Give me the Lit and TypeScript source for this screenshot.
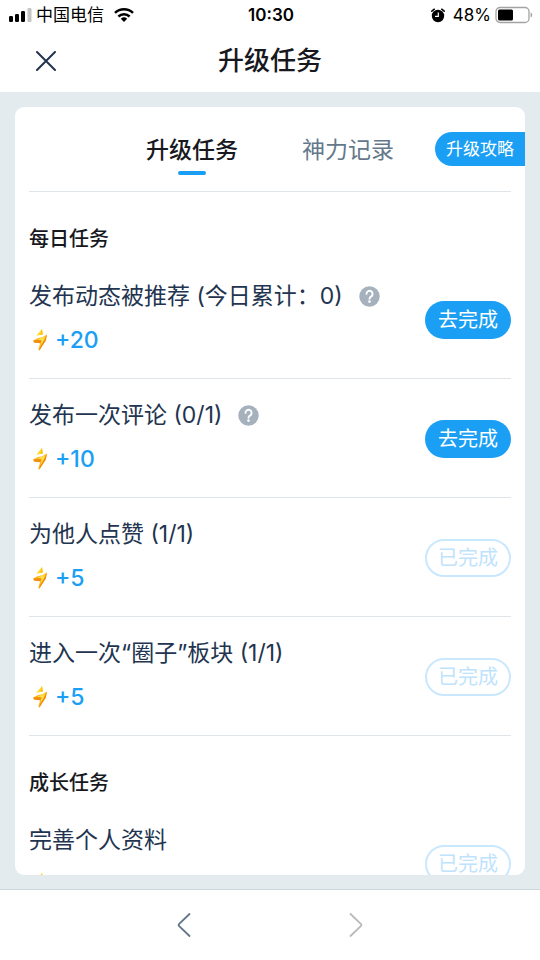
import { LitElement, html, css, svg, nothing } from "lit";
import { customElement, property, state } from "lit/decorators.js";
import { classMap } from "lit/directives/class-map.js";

interface Task {
  title: string;
  reward: number;
  done: boolean;
  help?: boolean;
}

interface TaskGroup {
  name: string;
  tasks: Task[];
}

const GROUPS: TaskGroup[] = [
  {
    name: "每日任务",
    tasks: [
      { title: "发布动态被推荐 (今日累计：0)", reward: 20, done: false, help: true },
      { title: "发布一次评论 (0/1)", reward: 10, done: false, help: true },
      { title: "为他人点赞 (1/1)", reward: 5, done: true },
      { title: "进入一次“圈子”板块 (1/1)", reward: 5, done: true },
    ],
  },
  {
    name: "成长任务",
    tasks: [{ title: "完善个人资料", reward: 10, done: true }],
  },
];

const reset = css`
  * {
    box-sizing: border-box;
  }
  button {
    margin: 0;
    padding: 0;
    border: 0;
    background: none;
    color: inherit;
    font: inherit;
    cursor: pointer;
  }
  svg {
    display: block;
  }
`;

@customElement("status-bar")
export class StatusBar extends LitElement {
  static styles = [
    reset,
    css`
      :host {
        display: grid;
        grid-template-columns: 1fr auto 1fr;
        align-items: center;
        height: 30px;
        padding: 0 7px 0 9px;
        color: #000;
        font-size: 17px;
        line-height: 24px;
      }
      .side {
        display: flex;
        align-items: center;
        gap: 4px;
      }
      .carrier {
        margin-right: 6px;
      }
      .right {
        justify-content: flex-end;
      }
      .time {
        font-weight: 600;
      }
      .alarm {
        margin-right: 4px;
      }
    `,
  ];

  render() {
    return html`
      <div class="side">
        <svg width="23" height="16" viewBox="0 0 23 16" aria-hidden="true">
          <rect x="0" y="9" width="4" height="6" rx="1.3" />
          <rect x="6" y="7" width="4" height="8" rx="1.3" />
          <rect x="12" y="4" width="4" height="11" rx="1.3" />
          <rect x="18.500" y="1" width="4" height="14" rx="1.3" fill="#c4c4c4" />
        </svg>
        <span class="carrier">中国电信</span>
        <svg width="20" height="15" viewBox="0 0 20 15" aria-hidden="true">
          <g fill="none" stroke="#000" stroke-width="2.5">
            <path d="M1 4.900a13 13 0 0 1 18 0" />
            <path d="M4.400 8.500a8 8 0 0 1 11.200 0" />
          </g>
          <path d="M6.800 10.800a4.700 4.700 0 0 1 6.400 0L10 14z" />
        </svg>
      </div>
      <div class="time">10:30</div>
      <div class="side right">
        <svg class="alarm" width="14" height="15" viewBox="0 0 14 15" aria-hidden="true">
          <circle cx="7" cy="8" r="6.200" />
          <path d="M.8 3.200L3.300 1.200M13.200 3.200L10.700 1.200" stroke="#000" stroke-width="1.500" stroke-linecap="round" />
          <path d="M7.300 4.600V8.400H4" fill="none" stroke="#fff" stroke-width="1.200" />
        </svg>
        <span>48%</span>
        <svg width="38" height="18" viewBox="0 0 38 18" aria-hidden="true">
          <rect x="1" y="1.500" width="33" height="15" rx="4" fill="none" stroke="#a3a3a3" stroke-width="1.300" />
          <rect x="3" y="3.500" width="15" height="11" rx="1.500" />
          <path d="M35.600 6.500c2.200.8 2.200 4.200 0 5z" fill="#a3a3a3" />
        </svg>
      </div>
    `;
  }
}

@customElement("task-row")
export class TaskRow extends LitElement {
  @property({ attribute: false }) task!: Task;

  static styles = [
    reset,
    css`
      :host {
        display: flex;
        align-items: center;
        justify-content: space-between;
        border-bottom: 1px solid #e0e5e9;
      }
      .info {
        padding: 20px 0 22px;
      }
      .title {
        display: flex;
        align-items: center;
        gap: 16px;
        margin: 0 0 12px;
        color: #22344f;
        font-size: 23px;
        font-weight: 400;
        line-height: 32px;
      }
      .help {
        border-radius: 50%;
      }
      .reward {
        display: flex;
        align-items: center;
        gap: 6px;
        padding-left: 4px;
        color: #1b9ff5;
        font-size: 23px;
        font-weight: 500;
        line-height: 32px;
      }
      .action {
        flex: none;
        width: 86px;
        height: 38px;
        margin-top: 2px;
        border-radius: 19px;
        background: #1b9ff5;
        color: #fff;
        font-size: 20px;
        line-height: 28px;
      }
      .action.done {
        border: 2px solid #c9e8fe;
        background: #fff;
        color: #bfe3fd;
      }
    `,
  ];

  private bolt() {
    return svg`
      <svg width="16" height="24" viewBox="0 0 16 24" aria-hidden="true">
        <path d="M9 1L3.300 7.800 9.800 6.600z" fill="#ffd923" />
        <path d="M9 1L7.400 7 9.800 6.600z" fill="#ffbb14" />
        <path d="M.3 12.600L4.500 10.300 9.300 9.300 14 6.600 12.800 12.400 6.200 22.800 5.300 21.600 7.200 15.200 1 14.400z" fill="#ffb616" />
        <path d="M.3 12.600L8.600 12 7.200 15.200 1 14.400z" fill="#f08c12" />
        <path d="M14 6.600L12.800 12.400 6.200 22.800 6.900 19.600 11.600 11.600z" fill="#ee8a10" />
        <path d="M4.500 11.400L12.300 8.600 10.800 12.200 7.400 18 8.800 12.600z" fill="#ffe04a" />
      </svg>
    `;
  }

  render() {
    const { title, reward, done, help } = this.task;
    return html`
      <div class="info">
        <h3 class="title">
          <span>${title}</span>
          ${help
            ? html`<button class="help" aria-label="任务说明">
                <svg width="21" height="21" viewBox="0 0 21 21" aria-hidden="true">
                  <circle cx="10.500" cy="10.500" r="10.200" fill="#a5b1bd" />
                  <path d="M7.500 7.900a3.050 3.050 0 1 1 4.800 2.500c-1.200.8-1.800 1.300-1.800 2.300" fill="none" stroke="#fff" stroke-width="1.900" stroke-linecap="round" />
                  <circle cx="10.500" cy="15.600" r="1.300" fill="#fff" />
                </svg>
              </button>`
            : nothing}
        </h3>
        <div class="reward">${this.bolt()}<span>+${reward}</span></div>
      </div>
      <button class=${classMap({ action: true, done })} ?disabled=${done}>
        ${done ? "已完成" : "去完成"}
      </button>
    `;
  }
}

@customElement("app-root")
export class AppRoot extends LitElement {
  @state() private tab = 0;

  static styles = [
    reset,
    css`
      :host {
        display: flex;
        flex-direction: column;
        height: 100vh;
        background: #e4ebef;
        color: #17191e;
        font-family: Inter, "Noto Sans CJK SC", sans-serif;
      }
      .top {
        flex: none;
        background: #fff;
      }
      .bar {
        display: grid;
        grid-template-columns: 1fr auto 1fr;
        align-items: center;
        height: 62px;
        padding: 0 32px;
      }
      .close {
        display: grid;
        place-items: center;
        width: 28px;
        height: 28px;
      }
      .heading {
        margin: 0;
        font-size: 26px;
        font-weight: 500;
        line-height: 36px;
      }
      .card {
        flex: 1;
        min-height: 0;
        margin: 15px 15px 14px;
        overflow: hidden;
        border-radius: 9px;
        background: #fff;
      }
      .tabs {
        display: grid;
        grid-template-columns: 1fr auto 1fr;
        align-items: center;
        height: 84px;
      }
      .tablist {
        grid-column: 2;
        display: flex;
        gap: 64px;
      }
      .tab {
        display: flex;
        flex-direction: column;
        align-items: center;
        gap: 5px;
        padding-top: 11px;
        color: #64788b;
        font-size: 23px;
        line-height: 32px;
      }
      .tab::after {
        content: "";
        width: 28px;
        height: 4px;
        border-radius: 2px;
      }
      .tab.active {
        color: #17191e;
        font-weight: 500;
      }
      .tab.active::after {
        background: #1b9ff5;
      }
      .guide {
        justify-self: end;
        padding: 5px 11px;
        border-radius: 17px 0 0 17px;
        background: #1b9ff5;
        color: #fff;
        font-size: 17px;
        line-height: 24px;
        text-decoration: none;
      }
      .content {
        margin: 0 14px;
        border-top: 1px solid #e0e5e9;
      }
      .group {
        margin: 0;
        padding: 33px 0 7px;
        font-size: 20px;
        font-weight: 500;
        line-height: 28px;
      }
      .nav {
        flex: none;
        display: flex;
        justify-content: center;
        gap: 144px;
        height: 71px;
        border-top: 1px solid #cbd8de;
        background: #fff;
      }
      .step {
        display: grid;
        place-items: center;
        width: 28px;
        height: 70px;
      }
    `,
  ];

  render() {
    return html`
      <header class="top">
        <status-bar></status-bar>
        <div class="bar">
          <button class="close" aria-label="关闭">
            <svg width="20" height="20" viewBox="0 0 20 20" aria-hidden="true">
              <path d="M1 1L19 19M19 1L1 19" stroke="#22344f" stroke-width="2" stroke-linecap="round" />
            </svg>
          </button>
          <h1 class="heading">升级任务</h1>
        </div>
      </header>
      <main class="card">
        <div class="tabs">
          <div class="tablist" role="tablist">
            ${["升级任务", "神力记录"].map(
              (label, i) => html`<button
                role="tab"
                aria-selected=${this.tab === i}
                class=${classMap({ tab: true, active: this.tab === i })}
                @click=${() => (this.tab = i)}
              >
                ${label}
              </button>`
            )}
          </div>
          <a class="guide" href="#guide">升级攻略</a>
        </div>
        <div class="content">
          ${GROUPS.map(
            (group) => html`
              <section>
                <h2 class="group">${group.name}</h2>
                ${group.tasks.map((task) => html`<task-row .task=${task}></task-row>`)}
              </section>
            `
          )}
        </div>
      </main>
      <nav class="nav">
        <button class="step" aria-label="后退">
          <svg width="14" height="26" viewBox="0 0 14 26" aria-hidden="true">
            <path d="M12.500 2L2.200 11.800Q1 13 2.200 14.200L12.500 24" fill="none" stroke="#5f7486" stroke-width="1.800" stroke-linecap="round" />
          </svg>
        </button>
        <button class="step" aria-label="前进" disabled>
          <svg width="14" height="26" viewBox="0 0 14 26" aria-hidden="true">
            <path d="M1.500 2L11.800 11.800Q13 13 11.800 14.200L1.500 24" fill="none" stroke="#b9b9b9" stroke-width="1.800" stroke-linecap="round" />
          </svg>
        </button>
      </nav>
    `;
  }
}
